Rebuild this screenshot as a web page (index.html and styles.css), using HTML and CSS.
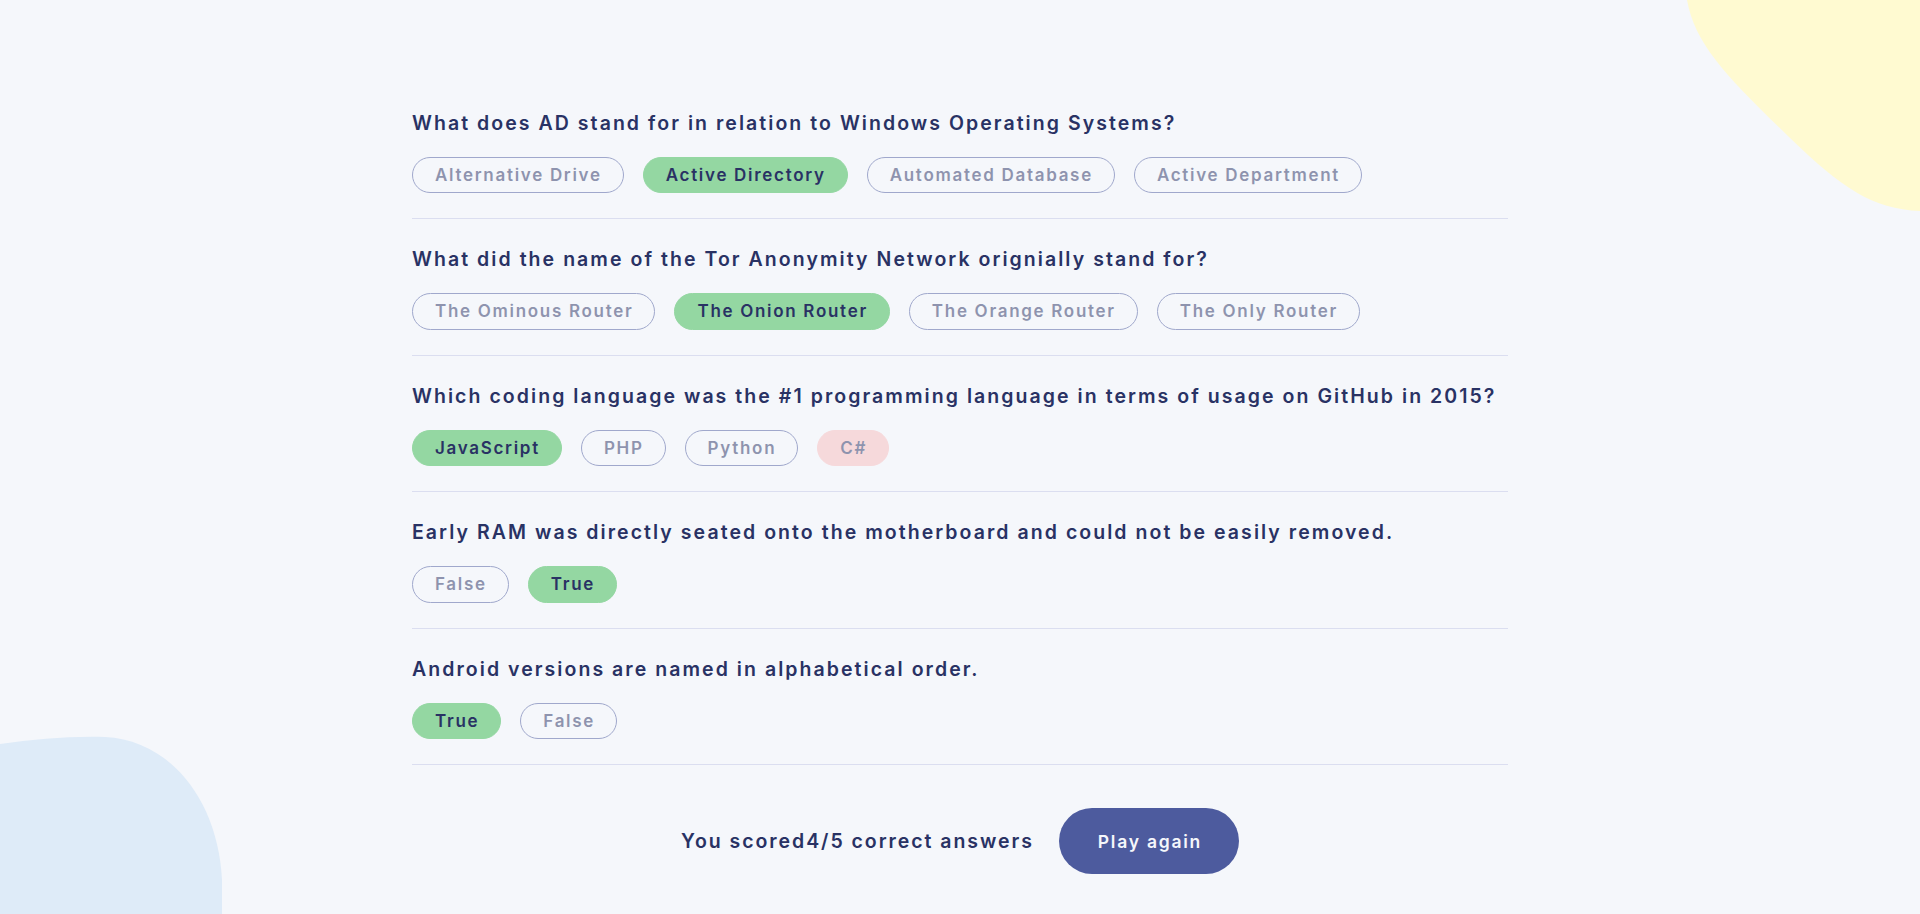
FILE: index.html
```html
<!DOCTYPE html>
<html lang="en">
<head>
<meta charset="utf-8">
<title>Quizzical</title>
<link rel="stylesheet" href="styles.css">
</head>
<body>
<svg class="blob blob-yellow" width="240" height="220" viewBox="1680 0 240 220" aria-hidden="true">
  <path d="M1687 0 C1695 45 1728 78 1790 138 C1842 188 1872 209 1920 211 L1920 0 Z" fill="#FFFAD1"/>
</svg>
<svg class="blob blob-blue" width="230" height="180" viewBox="0 734 230 180" aria-hidden="true">
  <path d="M0 744 C35 739 70 736 105 737 C170 740 218 800 222 880 L222 914 L0 914 Z" fill="#DEEBF8"/>
</svg>

<main class="quiz">
  <section class="question">
    <h2 class="question-title">What does AD stand for in relation to Windows Operating Systems?</h2>
    <div class="options">
      <span class="option dim">Alternative Drive</span>
      <span class="option correct">Active Directory</span>
      <span class="option dim">Automated Database</span>
      <span class="option dim">Active Department</span>
    </div>
  </section>
  <section class="question">
    <h2 class="question-title">What did the name of the Tor Anonymity Network orignially stand for?</h2>
    <div class="options">
      <span class="option dim">The Ominous Router</span>
      <span class="option correct">The Onion Router</span>
      <span class="option dim">The Orange Router</span>
      <span class="option dim">The Only Router</span>
    </div>
  </section>
  <section class="question">
    <h2 class="question-title">Which coding language was the #1 programming language in terms of usage on GitHub in 2015?</h2>
    <div class="options">
      <span class="option correct">JavaScript</span>
      <span class="option dim">PHP</span>
      <span class="option dim">Python</span>
      <span class="option wrong">C#</span>
    </div>
  </section>
  <section class="question">
    <h2 class="question-title">Early RAM was directly seated onto the motherboard and could not be easily removed.</h2>
    <div class="options">
      <span class="option dim">False</span>
      <span class="option correct">True</span>
    </div>
  </section>
  <section class="question">
    <h2 class="question-title">Android versions are named in alphabetical order.</h2>
    <div class="options">
      <span class="option correct">True</span>
      <span class="option dim">False</span>
    </div>
  </section>

  <footer class="result">
    <p class="score">You scored4/5 correct answers</p>
    <button class="play-btn" type="button">Play again</button>
  </footer>
</main>
</body>
</html>
```
FILE: styles.css
```css
* { box-sizing: border-box; }

html, body {
  margin: 0;
  padding: 0;
}

body {
  background: #F5F7FB;
  height: 914px;
  overflow: hidden;
  position: relative;
  font-family: "Inter", "Noto Sans", sans-serif;
  color: #293264;
}

.blob {
  position: absolute;
  display: block;
}
.blob-yellow { top: 0; right: 0; }
.blob-blue { bottom: 0; left: 0; }

.quiz {
  position: relative;
  width: 1096px;
  margin: 0 auto;
  padding-top: 82.5px;
}

.question {
  padding: 28px 0 25px;
  border-bottom: 1px solid #DBDEF0;
}

.question-title {
  margin: 0 0 22px;
  font-size: 19.5px;
  line-height: 24px;
  font-weight: 600;
  letter-spacing: 2.05px;
  color: #293264;
}

.options {
  display: flex;
  gap: 19px;
}

.option {
  display: inline-flex;
  align-items: center;
  height: 36.5px;
  padding: 0 21px 0 22px;
  border-radius: 19px;
  font-size: 17px;
  font-weight: 600;
  letter-spacing: 0.1em;
  color: #293264;
  border: 1px solid #4D5B9E;
}

.option.dim {
  opacity: 0.5;
}

.option.correct {
  background: #94D7A2;
  border-color: #94D7A2;
}

.option.wrong {
  background: #F8BCBC;
  border-color: #F8BCBC;
  opacity: 0.5;
}

.result {
  display: flex;
  justify-content: center;
  align-items: center;
  gap: 25px;
  margin-top: 43px;
}

.score {
  margin: 0;
  font-size: 19.5px;
  font-weight: 600;
  letter-spacing: 0.1em;
  color: #293264;
}

.play-btn {
  height: 66px;
  padding: 0 37px 0 39px;
  border: none;
  border-radius: 33px;
  background: #4D5B9E;
  color: #F5F7FB;
  font-family: inherit;
  font-size: 17.5px;
  font-weight: 600;
  letter-spacing: 0.1em;
}
```
